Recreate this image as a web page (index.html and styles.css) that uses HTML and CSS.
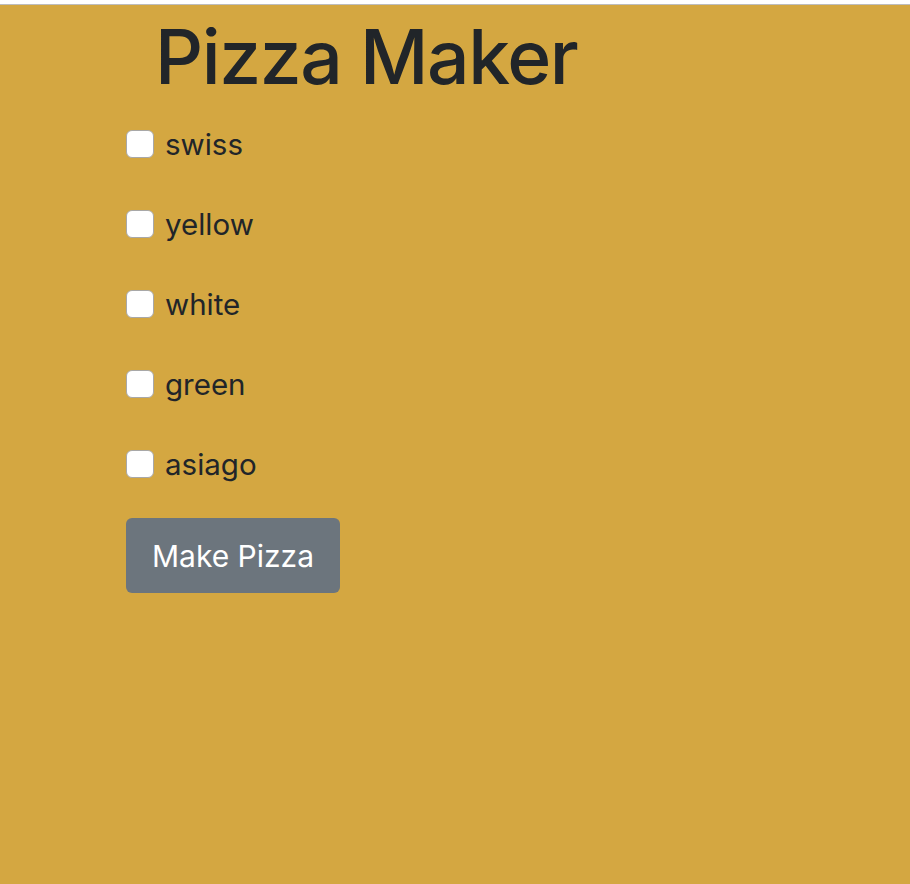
FILE: index.html
```html
<!DOCTYPE html>
<html>
<head>
<meta charset="utf-8">
<link rel="stylesheet" href="styles.css">
</head>
<body>
<div class="topbar"></div>
<main class="page">
  <h1 class="title">Pizza Maker</h1>
  <form class="form">
    <label class="option"><input type="checkbox" class="check"><span>swiss</span></label>
    <label class="option"><input type="checkbox" class="check"><span>yellow</span></label>
    <label class="option"><input type="checkbox" class="check"><span>white</span></label>
    <label class="option"><input type="checkbox" class="check"><span>green</span></label>
    <label class="option"><input type="checkbox" class="check"><span>asiago</span></label>
    <button type="button" class="btn">Make Pizza</button>
  </form>
</main>
</body>
</html>
```
FILE: styles.css
```css
html, body {
  margin: 0;
  padding: 0;
  height: 100%;
}
body {
  background: #d4a741;
  font-family: Inter, "Noto Sans", sans-serif;
  color: #212529;
  display: flex;
  flex-direction: column;
}
.topbar {
  height: 4px;
  background: #ffffff;
  border-bottom: 1px solid #bdbdbd;
  flex: none;
}
.page {
  flex: 1;
  padding-left: 126px;
}
.title {
  margin: 7px 0 0 29px;
  font-size: 75px;
  font-weight: 500;
  line-height: 90px;
  letter-spacing: -1.4px;
}
.form {
  display: flex;
  flex-direction: column;
  align-items: flex-start;
  margin-top: 2px;
}
.option {
  display: flex;
  align-items: center;
  gap: 11px;
  height: 80px;
  font-size: 29.5px;
}
.check {
  appearance: none;
  -webkit-appearance: none;
  margin: 0;
  width: 28px;
  height: 28px;
  background: #fff;
  border: 1.5px solid #a8a8a8;
  border-radius: 6px;
  box-sizing: border-box;
}
.btn {
  margin-top: 14px;
  width: 214px;
  height: 75px;
  background: #6c757d;
  color: #fff;
  border: none;
  border-radius: 6px;
  font-family: Inter, "Noto Sans", sans-serif;
  font-size: 30px;
  padding: 0;
}
```
